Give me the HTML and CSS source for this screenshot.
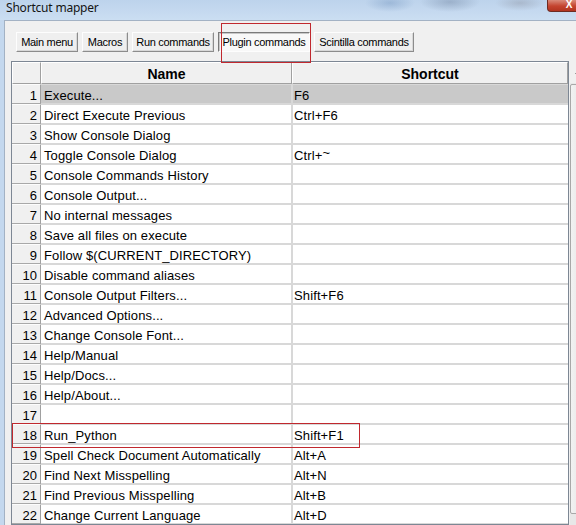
FILE: index.html
```html
<!DOCTYPE html>
<html lang="en">
<head>
<meta charset="utf-8">
<title>Shortcut mapper</title>
<link rel="stylesheet" href="styles.css">
</head>
<body>
<div class="titlebar">
  <span class="title">Shortcut mapper</span>
  <span class="close">X</span>
</div>
<div class="client">
  <div class="tabs">
    <button class="tab w-main">Main menu</button>
    <button class="tab w-macros">Macros</button>
    <button class="tab w-run">Run commands</button>
    <button class="tab w-plugin active">Plugin commands</button>
    <button class="tab w-scintilla">Scintilla commands</button>
  </div>
  <div class="gridwrap">
    <div class="grid">
      <div class="hd corner"></div><div class="hd">Name</div><div class="hd">Shortcut</div>
      <div class="num">1</div><div class="c name sel">Execute...</div><div class="c key sel">F6</div>
      <div class="num">2</div><div class="c name">Direct Execute Previous</div><div class="c key">Ctrl+F6</div>
      <div class="num">3</div><div class="c name">Show Console Dialog</div><div class="c key"></div>
      <div class="num">4</div><div class="c name">Toggle Console Dialog</div><div class="c key">Ctrl+<span class="tilde">~</span></div>
      <div class="num">5</div><div class="c name">Console Commands History</div><div class="c key"></div>
      <div class="num">6</div><div class="c name">Console Output...</div><div class="c key"></div>
      <div class="num">7</div><div class="c name">No internal messages</div><div class="c key"></div>
      <div class="num">8</div><div class="c name">Save all files on execute</div><div class="c key"></div>
      <div class="num">9</div><div class="c name">Follow $(CURRENT_DIRECTORY)</div><div class="c key"></div>
      <div class="num">10</div><div class="c name">Disable command aliases</div><div class="c key"></div>
      <div class="num">11</div><div class="c name">Console Output Filters...</div><div class="c key">Shift+F6</div>
      <div class="num">12</div><div class="c name">Advanced Options...</div><div class="c key"></div>
      <div class="num">13</div><div class="c name">Change Console Font...</div><div class="c key"></div>
      <div class="num">14</div><div class="c name">Help/Manual</div><div class="c key"></div>
      <div class="num">15</div><div class="c name">Help/Docs...</div><div class="c key"></div>
      <div class="num">16</div><div class="c name">Help/About...</div><div class="c key"></div>
      <div class="num">17</div><div class="c name"></div><div class="c key"></div>
      <div class="num">18</div><div class="c name">Run_Python</div><div class="c key">Shift+F1</div>
      <div class="num">19</div><div class="c name">Spell Check Document Automatically</div><div class="c key">Alt+A</div>
      <div class="num">20</div><div class="c name">Find Next Misspelling</div><div class="c key">Alt+N</div>
      <div class="num">21</div><div class="c name">Find Previous Misspelling</div><div class="c key">Alt+B</div>
      <div class="num">22</div><div class="c name">Change Current Language</div><div class="c key">Alt+D</div>
    </div>
    <div class="vscroll">
      <div class="sb-up"><span class="arrow"></span></div>
      <div class="sb-thumb"></div>
    </div>
  </div>
</div>
<div class="mark mark-tab"></div>
<div class="mark mark-row"></div>
</body>
</html>
```
FILE: styles.css
```css
* { box-sizing: border-box; }
html, body { margin: 0; padding: 0; }
body {
  width: 576px;
  height: 525px;
  overflow: hidden;
  position: relative;
  background: #c4d8ee;
  font-family: "Liberation Sans", Arial, sans-serif;
  color: #000;
}
.titlebar {
  height: 20px;
  display: flex;
  align-items: flex-start;
  background:
    radial-gradient(ellipse 30px 10px at 450px 2px, rgba(90,110,140,0.35), transparent),
    radial-gradient(ellipse 25px 9px at 390px 3px, rgba(80,120,170,0.3), transparent),
    radial-gradient(ellipse 25px 8px at 520px 3px, rgba(120,120,130,0.3), transparent),
    linear-gradient(#bdd3ec, #cbdef2);
}
.title {
  margin-left: 6px;
  font-family: "Noto Sans", "Open Sans", sans-serif;
  font-size: 12px;
  line-height: 16px;
  letter-spacing: -0.2px;
  color: #141414;
}
.close {
  margin-left: auto;
  margin-right: -15px;
  width: 44px;
  height: 12px;
  border: 1px solid #6e2b22;
  border-top: none;
  border-radius: 0 0 4px 4px;
  background: linear-gradient(#d98a7a, #c4442f 55%, #b23420);
  color: #fff;
  font: bold 10px/10px "Liberation Sans", Arial, sans-serif;
  text-align: center;
}
.client {
  margin-left: 4px;
  height: 505px;
  border-left: 1px solid #a3b2c4;
  border-top: 1px solid #a3b2c4;
  background: #f0f0f0;
}
.tabs {
  display: flex;
  gap: 4px;
  padding: 11px 0 0 11px;
}
.tab {
  appearance: none;
  margin: 0;
  padding: 0;
  height: 20px;
  font: 11px/18px "Liberation Sans", Arial, sans-serif;
  letter-spacing: -0.3px;
  text-align: center;
  color: #000;
  background: #efefef;
  border: 1px solid;
  border-color: #fdfdfd #8c8c8c #8c8c8c #fdfdfd;
  box-shadow: inset -1px -1px 0 #d8d8d8;
}
.tab.active {
  background: #f8f8f8;
  border-color: #7a7a7a #fdfdfd #fdfdfd #7a7a7a;
  box-shadow: inset 1px 1px 0 #c8c8c8;
}
.w-main { width: 62px; }
.w-macros { width: 46px; }
.w-run { width: 82px; }
.w-plugin { width: 92px; }
.w-scintilla { width: 100px; }

.gridwrap {
  display: flex;
  margin: 9px 0 0 6px;
}
.grid {
  flex-shrink: 0;
  display: grid;
  grid-template-columns: 29px 251px 276px;
  grid-template-rows: 22px;
  grid-auto-rows: 20px;
  border: 1px solid #7d8794;
  background: #fff;
}
.hd {
  background: #f0f0f0;
  border-top: 1px solid #fff;
  border-left: 1px solid #fff;
  border-right: 1px solid #a0a0a0;
  border-bottom: 1px solid #a0a0a0;
  font-weight: bold;
  font-size: 14px;
  line-height: 18px;
  padding-top: 2px;
  text-align: center;
}
.num {
  background: #f0f0f0;
  border-top: 1px solid #fcfcfc;
  border-bottom: 1px solid #a8a8a8;
  border-right: 1px solid #a0a0a0;
  font-size: 13px;
  line-height: 18px;
  padding-top: 2px;
  padding-right: 3px;
  text-align: right;
}
.c {
  border-top: 1px solid #d8d8d8;
  border-bottom: 1px solid #d8d8d8;
  font-size: 13px;
  line-height: 18px;
  letter-spacing: 0.12px;
  padding-top: 2px;
  white-space: nowrap;
  overflow: hidden;
}
.name {
  padding-left: 3px;
  border-right: 1px solid #d8d8d8;
}
.key {
  padding-left: 1px;
  border-left: 1px solid #d8d8d8;
}
.sel { background: #c9c9c9; }
.tilde {
  display: inline-block;
  transform: translateY(-3px);
}

.vscroll {
  flex-shrink: 0;
  margin-left: 1px;
  width: 17px;
  height: 464px;
  display: flex;
  flex-direction: column;
  background: #e8e8e8;
}
.sb-up {
  height: 22px;
  background: #f0f0f0;
  display: flex;
  align-items: center;
  justify-content: center;
}
.arrow {
  width: 0;
  height: 0;
  border-left: 4px solid transparent;
  border-right: 4px solid transparent;
  border-bottom: 4px solid #444;
}
.sb-thumb {
  margin-top: 1px;
  height: 430px;
  border: 1px solid #a8a8a8;
  border-radius: 2px;
  background: linear-gradient(90deg, #f2f2f2, #e2e2e2);
}

.mark {
  position: absolute;
  border: 1px solid #c0282e;
  pointer-events: none;
}
.mark-tab { left: 221px; top: 23px; width: 90px; height: 40px; }
.mark-row { left: 12px; top: 423px; width: 348px; height: 25px; }
```
